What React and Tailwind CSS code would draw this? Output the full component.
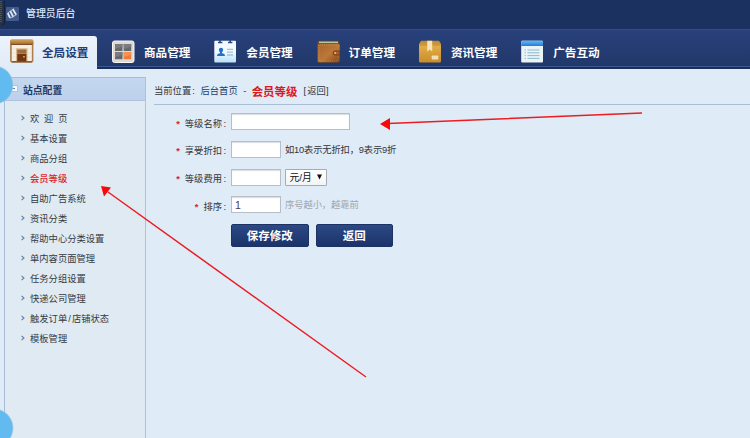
import React from "react";

function StoreIcon() {
  return (
    <svg width="24" height="24" viewBox="0 0 24 24" className="block">
      <defs>
        <linearGradient id="roof" x1="0" y1="0" x2="0" y2="1">
          <stop offset="0" stopColor="#d5a15c" />
          <stop offset="1" stopColor="#a86a30" />
        </linearGradient>
      </defs>
      <rect x="0.5" y="1" width="22.5" height="22.3" rx="1.5" fill="#b58657" stroke="#a07040" strokeWidth="0.7" />
      <rect x="1.8" y="6" width="20" height="16" fill="#f6eee3" />
      <path d="M2 10h19.5M2 14h19.5M2 18h19.5" stroke="#e9ddcd" strokeWidth="0.6" />
      <rect x="0.3" y="0.5" width="23" height="5" rx="1.2" fill="url(#roof)" />
      <path d="M1 5.4h21.5" stroke="#66401f" strokeWidth="0.8" />
      <rect x="6" y="9.3" width="11.5" height="13" fill="#d9b78f" />
      <rect x="7.2" y="10.5" width="9.2" height="4.2" fill="#a06a3c" />
      <rect x="7.2" y="15" width="9.2" height="7.5" fill="#70360f" />
      <rect x="13.2" y="17" width="1.5" height="1.5" fill="#e9b178" />
      <path d="M2 22.8h20" stroke="#7a4a22" strokeWidth="1" />
    </svg>
  );
}

function GridIcon() {
  return (
    <svg width="24" height="24" viewBox="0 0 24 24" className="block">
      <rect x="0.5" y="1" width="21.5" height="21.5" rx="2" fill="#ded9d7" stroke="#f7f4f1" />
      <rect x="3" y="4" width="7.5" height="7" fill="#67686b" />
      <rect x="11.7" y="4" width="7.5" height="7" fill="#67686b" />
      <rect x="3" y="12.2" width="7.5" height="7" fill="#67686b" />
      <rect x="11.7" y="12.2" width="7.5" height="7" fill="#ee7a35" />
      <path d="M3 4h7.5v2.5L3 9zM11.7 4h7.5v2.5L11.7 9zM3 12.2h7.5v2.5L3 17z" fill="#7b7c7f" />
      <path d="M11.7 12.2h7.5v2.5l-7.5 2.3z" fill="#f49355" />
    </svg>
  );
}

function MemberIcon() {
  return (
    <svg width="24" height="24" viewBox="0 0 24 24" className="block">
      <defs>
        <linearGradient id="card" x1="0" y1="0" x2="0" y2="1">
          <stop offset="0.5" stopColor="#f2faff" />
          <stop offset="1" stopColor="#b9e0f8" />
        </linearGradient>
      </defs>
      <rect x="0.3" y="0.7" width="21.7" height="21.8" rx="1" fill="url(#card)" />
      <path d="M4 2.5h4.4M14 2.5h4.4" stroke="#284b82" strokeWidth="1.4" />
      <path d="M6 0v2.5M16.2 0v2.5" stroke="#284b82" strokeWidth="1.6" />
      <circle cx="7" cy="10" r="2.2" fill="#246fca" />
      <path d="M3 16c0-2 1.5-2.5 3-2.8V11h2v2.2c1.7.3 3 .8 3 2.8z" fill="#246fca" />
      <path d="M13 9.4h6M13 12.2h6M13 15h6" stroke="#a3c1d7" strokeWidth="1.3" />
    </svg>
  );
}

function WalletIcon() {
  return (
    <svg width="24" height="24" viewBox="0 0 24 24" className="block">
      <defs>
        <linearGradient id="leather" x1="0" y1="0" x2="1" y2="1">
          <stop offset="0" stopColor="#a4662c" />
          <stop offset="0.55" stopColor="#bc7838" />
          <stop offset="1" stopColor="#824417" />
        </linearGradient>
      </defs>
      <rect x="0.3" y="0.7" width="22" height="21.9" rx="1.4" fill="#794619" />
      <path d="M2 2.3h19" stroke="#b7c8a2" strokeWidth="1.5" />
      <rect x="0.8" y="3.7" width="22" height="18.5" rx="1.5" fill="url(#leather)" />
      <rect x="2" y="5" width="19" height="16" rx="1" fill="none" stroke="#d49a5a" strokeWidth="0.6" strokeDasharray="1 1" />
      <path d="M22.8 11h-4.7a2 2 0 0 0 0 4h4.7z" fill="#a66129" stroke="#6a3613" strokeWidth="0.8" />
      <circle cx="18.2" cy="13" r="0.9" fill="#edc37d" />
    </svg>
  );
}

function BoxIcon() {
  return (
    <svg width="24" height="24" viewBox="0 0 24 24" className="block">
      <defs>
        <linearGradient id="box" x1="0" y1="0" x2="0" y2="1">
          <stop offset="0" stopColor="#bd8b34" />
          <stop offset="0.22" stopColor="#cf9b3f" />
          <stop offset="0.24" stopColor="#e1ad4b" />
          <stop offset="1" stopColor="#c98d29" />
        </linearGradient>
      </defs>
      <path d="M2 .7h18l2 3.3v17a1.5 1.5 0 0 1-1.5 1.5h-19A1.5 1.5 0 0 1 0 21V4z" fill="url(#box)" />
      <path d="M8.2.7h5v10.8l-2.5-2-2.5 2z" fill="#f5e4b6" />
      <rect x="12.7" y="15.5" width="6.6" height="4" rx="0.7" fill="#f3dfb4" />
    </svg>
  );
}

function ListIcon() {
  return (
    <svg width="24" height="24" viewBox="0 0 24 24" className="block">
      <defs>
        <linearGradient id="titlebar" x1="0" y1="0" x2="0" y2="1">
          <stop offset="0" stopColor="#64b8ff" />
          <stop offset="1" stopColor="#217dd4" />
        </linearGradient>
      </defs>
      <rect x="0.2" y="0.7" width="21.8" height="21.8" rx="1" fill="#eaf4f6" />
      <path d="M1.2.7H21a1 1 0 0 1 1 1v4.3H.2V1.7a1 1 0 0 1 1-1z" fill="url(#titlebar)" />
      <path d="M3.5 10h1.4M3.5 12.8h1.4M3.5 15.6h1.4M3.5 18.4h1.4M6.5 10h12M6.5 12.8h12M6.5 15.6h12M6.5 18.4h12" stroke="#81b3cb" strokeWidth="0.9" />
    </svg>
  );
}

const NAV = [
  { label: "商品管理", Icon: GridIcon },
  { label: "会员管理", Icon: MemberIcon },
  { label: "订单管理", Icon: WalletIcon },
  { label: "资讯管理", Icon: BoxIcon },
  { label: "广告互动", Icon: ListIcon },
];

const MENU = [
  "欢 迎 页", "基本设置", "商品分组", "会员等级", "自助广告系统", "资讯分类",
  "帮助中心分类设置", "单内容页面管理", "任务分组设置", "快递公司管理",
  "触发订单/店铺状态", "模板管理",
];

function Header() {
  return (
    <header className="flex h-[29px] items-center bg-[#1b3261]">
      <svg width="20" height="28" viewBox="0 0 20 28" className="block shrink-0">
        <path d="M0 0h4v22q0 2-2 2H0z" fill="#26313b" />
        <path d="M1 0v21" stroke="#658478" strokeDasharray="1 1" />
        <path d="M4.5 0v22q0 2-2 2" fill="none" stroke="#10203f" />
        <rect x="6" y="6" width="13" height="14" rx="1" fill="#425b8b" />
        <path d="M7.8 12.2l2.2 4.6M10.2 9.8l3.2 6.4M12.7 8l3.4 5.6" stroke="#e2ecf8" strokeWidth="1.8" />
        <path d="M7.2 12.6L13.4 7.8M10 17.2l6.6-3.6" stroke="#b9cae3" strokeWidth="0.9" />
      </svg>
      <span className="ml-1.5 mt-[-1px] text-[9.9px] leading-4 font-medium text-[#dce7f6]">管理员后台</span>
    </header>
  );
}

function Navigation() {
  return (
    <nav className="flex h-10 items-end border-t border-[#334d84] bg-linear-to-b from-[#28417c] to-[#213768] text-[11.6px] font-bold text-white">
      <div className="flex h-[33px] w-[97px] shrink-0 items-center rounded-tr-[3px] bg-linear-to-b from-[#edf3fc] to-[#dfebf7] pb-[4px] pl-[10px] text-[#1f3e7c]">
        <StoreIcon />
        <span className="ml-2 mt-[4px] whitespace-nowrap">全局设置</span>
      </div>
      <div className="flex h-[39px] flex-1 border-b-2 border-[#1a2f5c] shadow-[inset_0_-1px_#3b5790]">
        <div className="flex pl-[15px] pt-[6px]">
          {NAV.map(({ label, Icon }) => (
            <div key={label} className="flex h-[31px] w-[102.3px] items-center">
              <Icon />
              <span className="ml-2 mt-[2px] whitespace-nowrap">{label}</span>
            </div>
          ))}
        </div>
      </div>
    </nav>
  );
}

function Sidebar() {
  return (
    <aside className="ml-1 mt-2 w-[142px] shrink-0 border-x border-t border-[#a7bbd9] border-r-[#afc0dc] bg-[#e0eaf3]">
      <div className="flex h-[23px] items-center border-b border-[#acc2df] bg-linear-to-b from-[#c5d7ef] to-[#bdd1ec] pl-[6px] text-[9.8px] font-bold text-[#203963]">
        <svg width="7" height="8" viewBox="0 0 7 8">
          <path d="M0 .5h6.5v6H0z" fill="#f6faff" stroke="#9cb4d4" strokeWidth="0.7" />
          <path d="M0 3.5h4" stroke="#607fa9" />
        </svg>
        <span className="ml-[5px] mt-[4px]">站点配置</span>
      </div>
      <ul className="pt-[8px]">
        {MENU.map((item, i) => (
          <li key={item} className="flex h-5 items-center pl-4 text-[9.3px] leading-5 text-[#363b42]">
            <svg width="4" height="6" viewBox="0 0 4 6" className="mb-0.5 shrink-0">
              <path d="M.5.8L3 3 .5 5.2" fill="none" stroke="#66809f" strokeWidth="1.1" />
            </svg>
            <span className={i === 3 ? "ml-[5px] font-medium text-[#dc242d]" : "ml-[5px] whitespace-pre [word-spacing:2.2px]"}>
              {item.includes("/") ? (
                <>{item.split("/")[0]}<span className="inline-block w-[4.7px] text-center">/</span>{item.split("/")[1]}</>
              ) : item}
            </span>
          </li>
        ))}
      </ul>
    </aside>
  );
}

function FormRow({ label, children }) {
  return (
    <div className="flex h-[17px] items-center">
      <label className="flex w-[77px] shrink-0 items-center justify-end pt-[6px] pr-[4px]">
        <span className="mr-[5px] font-bold text-[#d8232a]">*</span>
        <span className="inline-flex">{label}<span className="w-[5px] pl-[1.5px]">:</span></span>
      </label>
      {children}
    </div>
  );
}

const field = "h-[17px] border border-[#b5bec9] bg-white px-[3px] text-[10.5px] text-[#4b354f] shadow-[inset_0_1px_1px_#d8dde2] outline-none";
const button = "h-[23px] w-[77.5px] rounded-[2px] border border-[#1c3263] bg-linear-to-b from-[#2c4986] to-[#1b3369] pt-px text-[11.5px] font-bold text-white";

function Content() {
  return (
    <main className="min-w-0 flex-1 pl-2 text-[9.3px] text-[#32363d]">
      <div className="flex h-9 items-center border-b border-[#a8bed5] pt-[11px]">
        <span>当前位置</span><span className="w-[9.3px] pl-px">:</span>
        <span className="text-[#273e68]">后台首页</span>
        <span className="w-[14px] text-center">-</span>
        <b className="text-[11.4px] leading-4 text-[#dc1721]">会员等级</b>
        <span className="ml-[5px]"><span className="inline-block w-[5px] text-center">[</span>返回]</span>
      </div>
      <form className="flex flex-col gap-[10.8px] pt-2" onSubmit={(e) => e.preventDefault()}>
        <FormRow label="等级名称">
          <input aria-label="等级名称" className={field + " w-[119px]"} />
        </FormRow>
        <FormRow label="享受折扣">
          <input aria-label="享受折扣" className={field + " w-[50px]"} />
          <span className="ml-1 mt-[3px] tracking-[-0.18px]">如10表示无折扣，9表示9折</span>
        </FormRow>
        <FormRow label="等级费用">
          <input aria-label="等级费用" className={field + " w-[50px]"} />
          <button type="button" className="ml-1 flex h-[17px] w-[42px] items-center justify-between rounded-[1px] border border-[#a4abb4] bg-linear-to-b from-white to-[#f3f4f5] pl-[3.5px] pr-1 text-[9.8px] text-[#111]">
            <span className="mt-[3px]">元/月</span>
            <svg width="5" height="6" viewBox="0 0 5 6"><path d="M0 .5h5L2.5 5.5z" fill="#111" /></svg>
          </button>
        </FormRow>
        <FormRow label="排序">
          <input aria-label="排序" defaultValue="1" className={field + " w-[50px]"} />
          <span className="ml-1 mt-[3px] tracking-[-0.08px] text-[#a0a6ae]">序号越小，越靠前</span>
        </FormRow>
        <div className="flex gap-[7px] pl-[77px]">
          <button type="submit" className={button}>保存修改</button>
          <button type="button" className={button}>返回</button>
        </div>
      </form>
    </main>
  );
}

export default function App() {
  return (
    <div className="relative h-[438px] w-[750px] overflow-hidden bg-[#dfebf7] font-['Liberation_Sans','Noto_Sans_CJK_SC',sans-serif]">
      <Header />
      <Navigation />
      <div className="flex h-[369px]">
        <Sidebar />
        <Content />
      </div>
      <svg className="pointer-events-none absolute inset-0" width="750" height="438" viewBox="0 0 750 438">
        <circle cx="-6" cy="85" r="19" fill="#61baf0" stroke="#a7c8df" strokeWidth="0.7" />
        <circle cx="-6" cy="428" r="19" fill="#61baf0" stroke="#a7c8df" strokeWidth="0.7" />
        <path d="M642 113L388 123.5M366 377L108 192" stroke="#ed1c20" strokeWidth="1.5" fill="none" />
        <path d="M380 124l10-6v12zM101 186l10 1.5-7 9z" fill="#f80808" />
      </svg>
    </div>
  );
}
